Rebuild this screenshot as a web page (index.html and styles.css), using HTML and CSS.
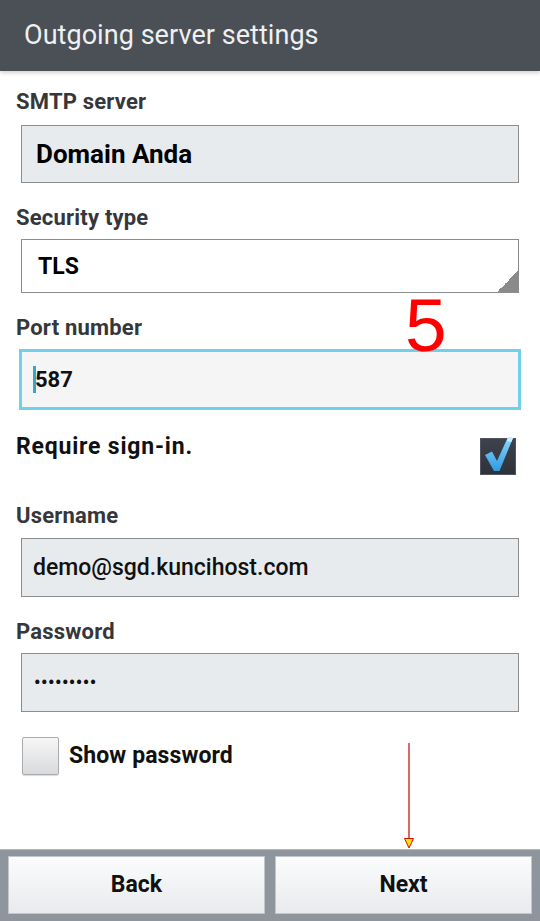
FILE: index.html
```html
<!DOCTYPE html>
<html>
<head>
<meta charset="utf-8">
<link rel="stylesheet" href="styles.css">
</head>
<body>
<div class="screen">
  <header class="appbar"><h1 class="title">Outgoing server settings</h1></header>
  <main class="content">
    <div class="label first">SMTP server</div>
    <div class="field big">Domain Anda</div>

    <div class="label">Security type</div>
    <div class="field select">TLS<span class="corner"></span></div>

    <div class="label">Port number</div>
    <div class="field focused"><span class="cursor"></span>587</div>

    <div class="check-row">
      <span class="check-text wide">Require sign-in.</span>
      <span class="checkbox-on">
        <svg width="36" height="37" viewBox="0 0 36 37">
          <defs>
            <linearGradient id="ck" x1="0" y1="0" x2="0" y2="1">
              <stop offset="0" stop-color="#8fd6ff"/>
              <stop offset="1" stop-color="#2f9be0"/>
            </linearGradient>
          </defs>
          <path d="M5 17 L12 13.5 L17 23 L28 -1 L33 0 L19.5 33 L14 33 Z" fill="url(#ck)"/>
          <path d="M28 -1 L33 0 L31.5 4 L27 3 Z" fill="#c8ecff"/>
        </svg>
      </span>
    </div>

    <div class="label user">Username</div>
    <div class="field user-val">demo@sgd.kuncihost.com</div>

    <div class="label">Password</div>
    <div class="field dots">•••••••••</div>

    <div class="show-row">
      <span class="checkbox-off"></span>
      <span class="check-text">Show password</span>
    </div>

    <div class="annot-five">5</div>
    <svg class="annot-arrow" width="12" height="108" viewBox="0 0 12 108">
      <line x1="6" y1="0" x2="6" y2="96" stroke="#c40000" stroke-width="1.2"/>
      <path d="M1.5 95.5 L10.5 95.5 L6 105 Z" fill="#ffe600" stroke="#d01000" stroke-width="1"/>
    </svg>
  </main>
  <footer class="bottombar">
    <button class="btn">Back</button>
    <button class="btn">Next</button>
  </footer>
</div>
</body>
</html>
```

FILE: styles.css
```css
* { box-sizing: border-box; }
html, body { margin: 0; padding: 0; }
body {
  width: 540px;
  height: 921px;
  background: #ffffff;
  font-family: Roboto, "Noto Sans", "Liberation Sans", sans-serif;
  overflow: hidden;
}
.screen {
  display: flex;
  flex-direction: column;
  height: 921px;
}
.appbar {
  height: 71px;
  background: #4b4f56;
  display: flex;
  align-items: center;
  padding-left: 24px;
  box-shadow: 0 2px 4px rgba(0,0,0,0.18);
  position: relative;
  z-index: 1;
}
.title {
  margin: 0;
  font-size: 27px;
  font-weight: 400;
  color: #eef0f2;
  letter-spacing: 0.05px;
  padding-bottom: 2px;
}
.content {
  flex: 1;
  position: relative;
  display: flex;
  flex-direction: column;
  padding: 0 16px;
}
.label {
  font-size: 22px;
  font-weight: 700;
  color: #35373a;
  line-height: 28px;
  padding-top: 21px;
  padding-bottom: 7px;
  letter-spacing: 0.2px;
}
.label.first { padding-top: 17px; padding-bottom: 9px; }
.label.user { padding-top: 27px; padding-bottom: 8px; }
.field {
  margin: 0 5px;
  height: 58px;
  background: #e7ebed;
  border: 1px solid #8c8c8c;
  display: flex;
  align-items: center;
  padding-left: 11px;
  font-size: 22px;
  font-weight: 500;
  color: #111;
  position: relative;
}
.field.user-val { font-size: 23px; height: 59px; }
.field.big {
  font-size: 26px;
  font-weight: 700;
  padding-left: 14px;
  color: #000;
}
.field.select {
  height: 54px;
  background: #ffffff;
  font-weight: 700;
  font-size: 23px;
  padding-left: 16px;
  color: #000;
}
.corner {
  position: absolute;
  right: 0;
  bottom: 0;
  width: 21px;
  height: 21px;
  background: linear-gradient(135deg, transparent 50%, #8a8a8a 50%);
}
.field.focused {
  margin: 0 3px;
  height: 61px;
  border: 3px solid #6fd0e8;
  background: #f5f5f5;
  padding-left: 11px;
  font-weight: 700;
  color: #111;
}
.cursor {
  display: inline-block;
  width: 3px;
  height: 27px;
  background: #33a9c4;
  margin-right: -1px;
}
.field.dots {
  font-size: 18px;
  font-weight: 700;
  letter-spacing: 0.5px;
  padding-left: 12px;
  height: 59px;
}
.check-row {
  margin-top: 23px;
  display: flex;
  justify-content: space-between;
  align-items: flex-start;
}
.check-text {
  font-size: 23px;
  font-weight: 700;
  color: #111;
  line-height: 28px;
  letter-spacing: 0.1px;
}
.check-text.wide { letter-spacing: 0.8px; }
.checkbox-on {
  margin-top: 5px;
  margin-right: 8px;
  width: 36px;
  height: 37px;
  background: linear-gradient(#3d424c, #2e323a);
  border: 1px solid #50555e;
  display: block;
  overflow: visible;
}
.checkbox-on svg { display: block; margin: -1px; overflow: visible; }
.show-row {
  margin-top: 25px;
  display: flex;
  align-items: center;
  gap: 10px;
  margin-left: 6px;
}
.checkbox-off {
  width: 37px;
  height: 38px;
  border: 1px solid #a9abae;
  border-radius: 2px;
  background: linear-gradient(#f6f6f7, #d9dadc);
  box-shadow: 0 1px 1px rgba(0,0,0,0.15);
}
.annot-five {
  position: absolute;
  left: 405px;
  top: 217px;
  font-family: "Liberation Sans", Arial, sans-serif;
  font-size: 75px;
  line-height: 1;
  color: #ff0000;
}
.annot-arrow {
  position: absolute;
  left: 403px;
  top: 672px;
}
.bottombar {
  height: 72px;
  background: #8f959d;
  border-top: 1px solid #b3b7bd;
  display: flex;
  gap: 10px;
  padding: 6px 8px 7px 8px;
}
.btn {
  flex: 1;
  height: 58px;
  border: 1px solid #c3c6ca;
  background: linear-gradient(#fbfcfc, #e8eaed);
  font-family: Roboto, "Noto Sans", "Liberation Sans", sans-serif;
  font-size: 23px;
  font-weight: 700;
  color: #111;
  padding: 0 0 2px 0;
}
```
